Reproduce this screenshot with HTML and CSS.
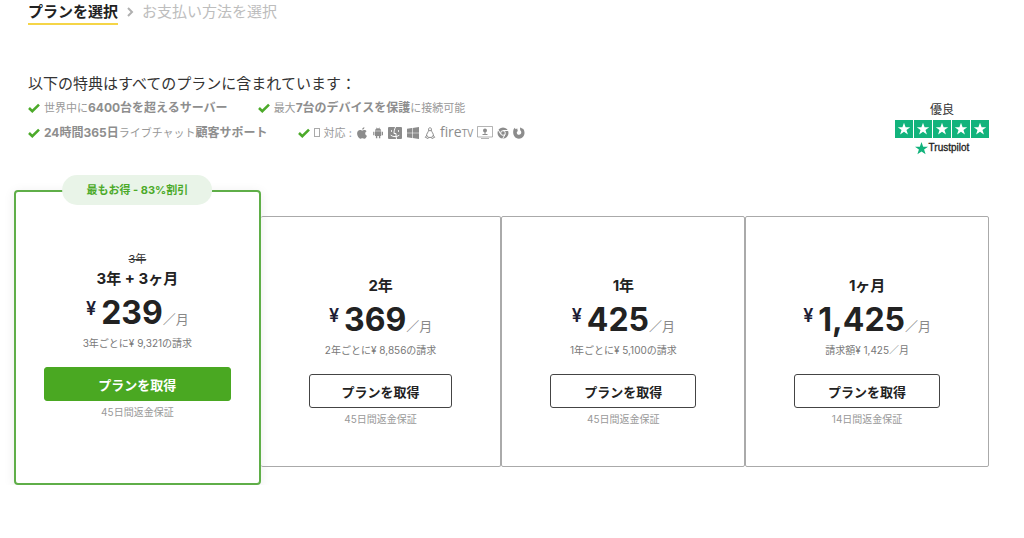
FILE: index.html
```html
<!DOCTYPE html>
<html lang="ja">
<head>
<meta charset="utf-8">
<meta name="viewport" content="width=device-width, initial-scale=1">
<title>プランを選択</title>
<link rel="stylesheet" href="styles.css">
</head>
<body>
<svg class="sprite" aria-hidden="true">
  <symbol id="check" viewBox="0 0 12 10"><path d="M1 5 4.300 8.200 11 1.600" fill="none" stroke="currentColor" stroke-width="2.600"/></symbol>
  <symbol id="star" viewBox="0 0 18 18"><path fill="currentColor" d="M9 2l1.800 5h5.200l-4.200 3.100 1.600 5.100L9 12.100l-4.400 3.100 1.600-5.100L2 7h5.200z"/></symbol>
</svg>
<div class="page">
  <nav class="steps" aria-label="手順">
    <span class="step step-current" aria-current="step">プランを選択</span>
    <svg class="chevron" viewBox="0 0 8 10" aria-hidden="true"><path d="M2 1l4 4-4 4" fill="none" stroke="currentColor" stroke-width="2"/></svg>
    <span class="step">お支払い方法を選択</span>
  </nav>

  <section class="intro">
    <div class="benefits">
      <h1 class="benefits-title">以下の特典はすべてのプランに含まれています：</h1>
      <ul class="benefit-row">
        <li class="benefit"><svg class="check"><use href="#check"/></svg><span>世界中に<strong>6400台を超えるサーバー</strong></span></li>
        <li class="benefit"><svg class="check"><use href="#check"/></svg><span>最大<strong>7台のデバイスを保護</strong>に接続可能</span></li>
      </ul>
      <ul class="benefit-row">
        <li class="benefit"><svg class="check"><use href="#check"/></svg><span><strong>24時間365日</strong>ライブチャット<strong>顧客サポート</strong></span></li>
        <li class="benefit"><svg class="check"><use href="#check"/></svg><span class="blank-glyph"></span><span>対応 :</span>
          <span class="platforms">
            <svg class="platform" viewBox="0 0 12 12"><path fill="currentColor" d="M8.400.2c.1 1.200-1 2.400-2.200 2.400C6 1.400 7.200.4 8.400.2zM8.300 3c1 0 1.800.5 2.300 1.200-2 1.200-1.700 3.700.4 4.500-.5 1.300-1.500 3-2.500 3-.9 0-1.100-.5-2.100-.5s-1.300.5-2.100.5C2.900 11.700 1.100 8.800 1.100 6.600 1.100 4.300 2.500 3 4.100 3c1 0 1.600.6 2.300.6S7.400 3 8.300 3z"/></svg>
            <svg class="platform" viewBox="0 0 12 12"><path fill="currentColor" d="M3 3.800C3.200 2.500 4 1.800 4.400 1.600L3.900.6l.4-.2.6 1c.7-.3 1.500-.3 2.200 0l.6-1 .4.2-.5 1C8.200 1.800 9 2.500 9.200 3.800zM3 4.300h6.200v4.800H8.300v2.100H6.900V9.100H5.300v2.100H3.900V9.100H3zM1.200 4.700h1.200v3.500H1.200zM9.800 4.700H11v3.500H9.800z"/></svg>
            <svg class="platform platform-wide" viewBox="0 0 14 12"><rect width="14" height="12" rx="1" fill="currentColor"/><path d="M7.600 0C6.400 2.200 6 4.300 6 6.500h2c-.1 2 0 3.600.5 5.500M3.500 3.200v1.600M10.500 3.200v1.600M2.700 8.200c2.500 1.900 6.100 1.900 8.600 0" stroke="#fff" fill="none"/></svg>
            <svg class="platform platform-wide" viewBox="0 0 14 12"><path fill="currentColor" d="M1 1.800l5-.7v4.600H1zM6.600 1 13 .1v5.600H6.600zM1 6.300h5v4.600l-5-.7zM6.600 6.300H13v5.600L6.600 11z"/></svg>
            <svg class="platform" viewBox="0 0 12 12"><path d="M4.600 3.200C4.500 1.500 5 .7 6 .7s1.500.8 1.400 2.500c0 1.600 2.200 3.300 2.200 5.800M4.600 3.200C4.600 5 2.400 6.500 2.400 9M5 3.300l1 .7 1-.7M1.300 10.300l1.500-1.900 2 2.400-.7.700zM10.700 10.300 9.200 8.400l-2 2.400.7.700zM4.800 10.400h2.400" fill="none" stroke="currentColor"/></svg>
            <span class="fire-tv">fire<small class="tv">TV</small></span>
            <svg class="platform platform-box" viewBox="0 0 16 13"><path d="M.5.500h15v10.500H.5zM4 12.500h8" fill="none" stroke="currentColor" opacity=".65"/><circle cx="8" cy="4.500" r="2" fill="currentColor"/><path d="M8 4v5M5.500 8.500h5" stroke="currentColor"/></svg>
            <svg class="platform" viewBox="0 0 12 12"><circle cx="6" cy="6" r="5.500" fill="currentColor"/><path d="M6 3.500h5M3.800 7.300 1.300 3M8.200 7.300 5.700 11.600" stroke="#fff"/><circle cx="6" cy="6" r="2.300" fill="currentColor" stroke="#fff"/></svg>
            <svg class="platform" viewBox="0 0 12 12"><path fill="currentColor" d="M.6 2.200 1.800.8l.8 1.400c.9-.5 1.800-.4 2.300-.1C4 2.600 4.100 3.200 5 3.700L3.900 4.900c-.5 1.500.5 2.800 2.100 2.800 2.400 0 3.100-2.800 1.200-4.500L7 .6c1.100.2 1.900.7 2.400 1.500l.3-.8c1.200 1.200 1.900 2.900 1.800 4.700C11.400 9.300 9 11.700 6 11.700.8 11.700-.700 6.300.6 2.200z"/></svg>
          </span>
        </li>
      </ul>
    </div>
    <div class="trust">
      <span class="trust-grade">優良</span>
      <div class="trust-stars" role="img" aria-label="5つ星">
        <svg class="trust-star"><use href="#star"/></svg>
        <svg class="trust-star"><use href="#star"/></svg>
        <svg class="trust-star"><use href="#star"/></svg>
        <svg class="trust-star"><use href="#star"/></svg>
        <svg class="trust-star"><use href="#star"/></svg>
      </div>
      <a class="trust-brand" href="#"><svg class="brand-star" viewBox="2 2 14 14"><use href="#star" width="18" height="18"/></svg>Trustpilot</a>
    </div>
  </section>

  <main class="plans">
    <article class="plan plan-featured">
      <div class="ribbon">最もお得 - 83%割引</div>
      <s class="old-term">3年</s>
      <h2 class="term">3年 + 3ヶ月</h2>
      <p class="price"><span class="yen">¥</span><span class="amount">239</span><span class="per">／月</span></p>
      <p class="billed">3年ごとに¥ 9,321の請求</p>
      <button class="buy buy-primary" type="button">プランを取得</button>
      <p class="refund">45日間返金保証</p>
    </article>
    <article class="plan">
      <h2 class="term">2年</h2>
      <p class="price"><span class="yen">¥</span><span class="amount">369</span><span class="per">／月</span></p>
      <p class="billed">2年ごとに¥ 8,856の請求</p>
      <button class="buy" type="button">プランを取得</button>
      <p class="refund">45日間返金保証</p>
    </article>
    <article class="plan">
      <h2 class="term">1年</h2>
      <p class="price"><span class="yen">¥</span><span class="amount">425</span><span class="per">／月</span></p>
      <p class="billed">1年ごとに¥ 5,100の請求</p>
      <button class="buy" type="button">プランを取得</button>
      <p class="refund">45日間返金保証</p>
    </article>
    <article class="plan">
      <h2 class="term">1ヶ月</h2>
      <p class="price"><span class="yen">¥</span><span class="amount">1,425</span><span class="per">／月</span></p>
      <p class="billed">請求額¥ 1,425／月</p>
      <button class="buy" type="button">プランを取得</button>
      <p class="refund">14日間返金保証</p>
    </article>
  </main>
</div>
</body>
</html>
```
FILE: styles.css
```css
* {
  box-sizing: border-box;
}

body {
  margin: 0;
  background: #fff;
  color: #222;
  font-family: Inter, "Noto Sans CJK JP", sans-serif;
}

h1, h2, p, ul {
  margin: 0;
  padding: 0;
}

.sprite {
  display: none;
}

.page {
  padding: 0 35px 0 14px;
}

.steps {
  display: flex;
  align-items: flex-start;
  gap: 8px;
  padding: 2px 14px 0;
  font-size: 15px;
  line-height: 20px;
  color: #bdbdbd;
}

.step-current {
  padding-bottom: 1px;
  border-bottom: 2px solid #f5d547;
  font-weight: 700;
  color: #222;
}

.chevron {
  width: 8px;
  height: 10px;
  margin-top: 5px;
  color: #b0b0b0;
}

.intro {
  display: flex;
  justify-content: space-between;
  align-items: flex-start;
  padding: 48px 0 0 14px;
}

.benefits-title {
  font-size: 15px;
  font-weight: 400;
  line-height: 22px;
  color: #333;
}

.benefit-row {
  display: flex;
  gap: 30px;
  height: 25px;
  align-items: center;
  list-style: none;
  font-size: 11px;
  line-height: 16px;
  color: #999;
}

.benefit {
  display: flex;
  align-items: center;
  gap: 4px;
  white-space: nowrap;
}

.benefit strong {
  font-size: 12px;
  font-weight: 700;
  color: #8e8e8e;
}

.check {
  width: 12px;
  height: 10px;
  color: #4caa2a;
}

.blank-glyph {
  width: 6px;
  height: 9px;
  border: 1px solid #aaa;
}

.platforms {
  display: flex;
  align-items: center;
  gap: 4px;
  color: #8c8c8c;
}

.platform {
  width: 12px;
  height: 12px;
}

.platform-wide {
  width: 14px;
}

.platform-box {
  width: 16px;
  height: 13px;
}

.fire-tv {
  font-family: "Open Sans", sans-serif;
  font-size: 14px;
}

.tv {
  font-size: 10px;
}

.trust {
  display: flex;
  flex-direction: column;
  align-items: center;
  margin-top: 29px;
  line-height: 16px;
}

.trust-grade {
  font-size: 12px;
  color: #333;
}

.trust-stars {
  display: flex;
  gap: 1px;
  margin: 2px 0;
}

.trust-star {
  width: 18px;
  height: 18px;
  padding: 1px;
  background: #12b37c;
  color: #fff;
}

.trust-brand {
  display: flex;
  align-items: center;
  gap: 1px;
  font-family: "Liberation Sans", sans-serif;
  font-size: 10px;
  color: #222;
  text-decoration: none;
  -webkit-text-stroke: 0.3px #222;
}

.brand-star {
  width: 13px;
  height: 13px;
  color: #12b37c;
}

.plans {
  display: grid;
  grid-template-columns: 247fr 241fr 244fr 244fr;
  align-items: start;
  padding-top: 34px;
}

.plan {
  display: flex;
  flex-direction: column;
  align-items: stretch;
  margin-top: 26px;
  padding: 57px 48px 39px;
  border: 1px solid #aaa;
  border-radius: 2px;
  text-align: center;
}

.plan-featured {
  position: relative;
  margin-top: 0;
  padding: 59px 28px 63px;
  border: 2px solid #5fae48;
  border-radius: 4px;
  box-shadow: 0 2px 12px rgba(0, 0, 0, 0.08);
}

.plan-featured + .plan {
  border-left: 0;
}

.ribbon {
  position: absolute;
  top: -17px;
  left: 50%;
  transform: translateX(-50%);
  padding: 0 24px;
  border-radius: 15px;
  background: #e9f4e8;
  font-size: 11px;
  font-weight: 700;
  line-height: 30px;
  color: #4caa2a;
  white-space: nowrap;
}

.old-term {
  font-size: 11px;
  line-height: 16px;
  color: #333;
}

.term {
  font-size: 15px;
  font-weight: 700;
  line-height: 24px;
}

.price {
  display: flex;
  justify-content: center;
  align-items: baseline;
  height: 44px;
  line-height: 44px;
}

.yen {
  align-self: flex-start;
  margin-right: 5px;
  font-size: 18px;
  font-weight: 600;
  line-height: 36px;
  color: #1d1d35;
}

.amount {
  font-size: 32px;
  font-weight: 700;
}

.per {
  font-size: 13px;
  color: #888;
}

.billed {
  font-size: 10px;
  line-height: 16px;
  color: #777;
}

.buy {
  height: 34px;
  margin: 16px 0 3px;
  padding: 0;
  border: 1px solid #444;
  border-radius: 3px;
  background: #fff;
  font-family: inherit;
  font-size: 13px;
  font-weight: 700;
  color: #222;
}

.buy-primary {
  border-color: #4aa822;
  background: #4aa822;
  color: #fff;
}

.refund {
  font-size: 10px;
  line-height: 16px;
  color: #999;
}
```
